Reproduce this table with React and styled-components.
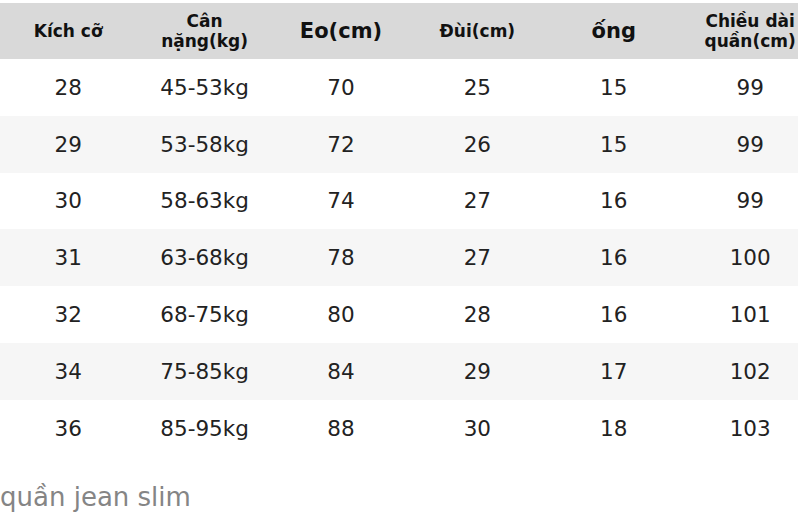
import styled, { createGlobalStyle } from "styled-components";

const GlobalStyle = createGlobalStyle`
  html, body {
    margin: 0;
    padding: 0;
    background: #fff;
  }
  body {
    width: 798px;
    height: 530px;
    overflow: hidden;
    font-family: "DejaVu Sans", "Noto Sans", sans-serif;
  }
`;

const Page = styled.div`
  width: 798px;
  height: 530px;
  overflow: hidden;
  padding-top: 3px;
  box-sizing: border-box;
`;

const Table = styled.div`
  width: 818px;
  display: grid;
  grid-template-columns: repeat(6, 136.4px);
`;

const HeadCell = styled.div`
  height: 56px;
  background: #d9d9d9;
  display: flex;
  align-items: center;
  justify-content: center;
  text-align: center;
  font-weight: bold;
  font-size: ${(p) => (p.$big ? "21px" : "17px")};
  line-height: 20px;
  color: #111;
`;

const Cell = styled.div`
  height: 56.8px;
  background: ${(p) => (p.$shade ? "#f6f6f6" : "#fff")};
  display: flex;
  align-items: center;
  justify-content: center;
  font-size: 21.5px;
  color: #222;
`;

const Caption = styled.div`
  margin-top: 25.5px;
  font-size: 26px;
  color: #858585;
`;

const headers = [
  { label: "Kích cỡ" },
  { label: <>Cân<br />nặng(kg)</> },
  { label: "Eo(cm)", big: true },
  { label: "Đùi(cm)" },
  { label: "ống", big: true },
  { label: <>Chiều dài<br />quần(cm)</> },
];

const rows = [
  ["28", "45-53kg", "70", "25", "15", "99"],
  ["29", "53-58kg", "72", "26", "15", "99"],
  ["30", "58-63kg", "74", "27", "16", "99"],
  ["31", "63-68kg", "78", "27", "16", "100"],
  ["32", "68-75kg", "80", "28", "16", "101"],
  ["34", "75-85kg", "84", "29", "17", "102"],
  ["36", "85-95kg", "88", "30", "18", "103"],
];

export default function App() {
  return (
    <>
      <GlobalStyle />
      <Page>
        <Table>
          {headers.map((h, i) => (
            <HeadCell key={i} $big={h.big}>{h.label}</HeadCell>
          ))}
          {rows.map((r, ri) =>
            r.map((v, ci) => (
              <Cell key={`${ri}-${ci}`} $shade={ri % 2 === 1}>{v}</Cell>
            ))
          )}
        </Table>
        <Caption>quần jean slim</Caption>
      </Page>
    </>
  );
}
